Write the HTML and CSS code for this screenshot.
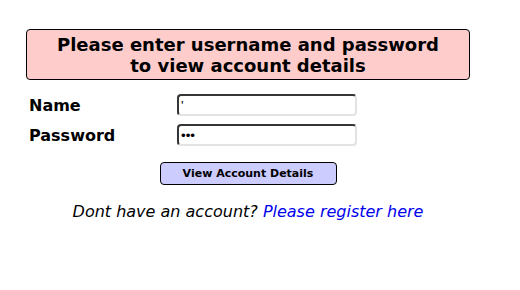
FILE: index.html
```
<!DOCTYPE html>
<html>
<head>
<meta charset="utf-8">
<link rel="stylesheet" href="styles.css">
</head>
<body>
<div class="page">
  <div class="notice">Please enter username and password<br>to view account details</div>
  <form class="login">
    <div class="row">
      <label class="label">Name</label>
      <input class="field" type="text" value="'">
    </div>
    <div class="row">
      <label class="label">Password</label>
      <input class="field" type="password" value="abc">
    </div>
    <div class="actions">
      <button class="btn" type="button">View Account Details</button>
    </div>
  </form>
  <p class="register">Dont have an account? <a href="#">Please register here</a></p>
</div>
</body>
</html>
```
FILE: styles.css
```
html, body {
  margin: 0;
  padding: 0;
  background: #fff;
}
body {
  padding: 8px;
  font-family: "DejaVu Sans", sans-serif;
  color: #000;
}
.page {
  width: 480px;
}
.notice {
  margin: 21px 18px 0 18px;
  background: #ffcccc;
  border: 1px solid #000;
  border-radius: 4px;
  padding: 4px 0 3px;
  text-align: center;
  font-weight: bold;
  font-size: 18px;
  line-height: 21px;
}
.login {
  margin: 14px 0 0 0;
}
.row {
  display: flex;
  align-items: center;
  height: 22px;
  margin-bottom: 8px;
}
.label {
  width: 148px;
  padding-left: 21px;
  font-weight: bold;
  font-size: 16px;
}
.field {
  box-sizing: border-box;
  width: 180px;
  height: 22px;
  margin: 0;
  padding: 1px 2px;
  border: 2px inset #767676;
  border-top-color: #8a8a8a;
  border-left-color: #8a8a8a;
  border-bottom-color: #e3e3e3;
  border-right-color: #e3e3e3;
  border-radius: 4px;
  font-family: "Liberation Sans", Arial, sans-serif;
  font-size: 13.333px;
  background: #fff;
}
.actions {
  display: flex;
  justify-content: center;
  margin-top: 16px;
}
.btn {
  box-sizing: border-box;
  width: 177px;
  height: 23px;
  margin: 0;
  padding: 0;
  background: #ccccff;
  border: 1px solid #000;
  border-radius: 4px;
  font-family: "DejaVu Sans", sans-serif;
  font-weight: bold;
  font-size: 11px;
  color: #000;
}
.register {
  margin: 17px 0 0 0;
  text-align: center;
  font-style: italic;
  font-size: 16px;
}
.register a {
  color: #0000ee;
  text-decoration: none;
}
```
